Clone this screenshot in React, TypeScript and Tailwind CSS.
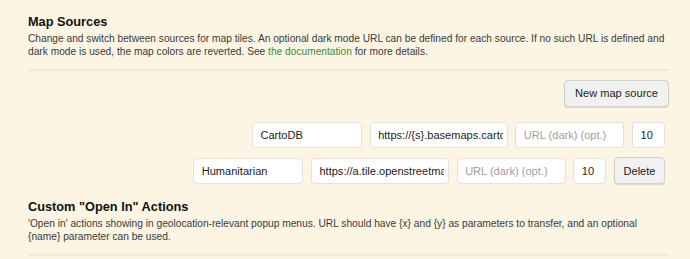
import React from "react";

const inputCls =
  "h-[26.5px] rounded-[4px] border border-[#e3e0d8] bg-white pl-[7.5px] pr-[4px] text-[11.05px] text-[#222] placeholder:text-[#a0a0a0] outline-none";

function Row({ name, url, del }: { name: string; url: string; del?: boolean }) {
  return (
    <div className="flex justify-end items-center gap-[7.7px] pr-[4px]">
      <input className={`${inputCls} w-[110px]`} defaultValue={name} />
      <input className={`${inputCls} w-[138px]`} defaultValue={url} />
      <input className={`${inputCls} w-[109px]`} placeholder="URL (dark) (opt.)" />
      <input className={`${inputCls} w-[33px]`} defaultValue="10" />
      {del && (
        <button className="h-[27px] w-[51px] rounded-[4px] border border-[#cfcfcf] bg-[#f1f1f1] text-[11.05px] text-[#222] shadow-[0_1px_1px_rgba(0,0,0,0.12)]">
          Delete
        </button>
      )}
    </div>
  );
}

export default function App() {
  return (
    <div
      className="w-[690px] h-[259px] overflow-hidden bg-[#fcf5e4] pl-[28px] pr-[21px] pt-[14px]"
      style={{ fontFamily: '"Liberation Sans", Arial, sans-serif' }}
    >
      <h2 className="text-[12.75px] leading-[15px] font-bold text-[#111]">Map Sources</h2>
      <p className="mt-[4.4px] text-[10.2px] leading-[12.4px] text-[#3a3a3a]">
        Change and switch between sources for map tiles. An optional dark mode URL can be defined for each source. If no such URL is defined and dark mode is used, the map colors are reverted. See{" "}
        <a className="text-[#3a8f3a]">the documentation</a> for more details.
      </p>
      <div className="mt-[10.6px] h-[2px] bg-[#efeadd]" />
      <div className="mt-[9px] flex justify-end">
        <button className="h-[27px] px-[10px] rounded-[4px] border border-[#cfcfcf] bg-[#f1f1f1] text-[11.05px] text-[#222] shadow-[0_1px_1px_rgba(0,0,0,0.12)]">
          New map source
        </button>
      </div>
      <div className="mt-[15px] flex flex-col gap-[9px]">
        <Row name="CartoDB" url="https://{s}.basemaps.cartocdn.com/rastertiles/voyager/{z}/{x}/{y}.png" />
        <Row name="Humanitarian" url="https://a.tile.openstreetmap.fr/hot/{z}/{x}/{y}.png" del />
      </div>
      <h2 className="mt-[14.8px] text-[12.75px] leading-[15px] font-bold text-[#111]">
        Custom "Open In" Actions
      </h2>
      <p className="mt-[4.4px] text-[10.2px] leading-[12.4px] text-[#3a3a3a]">
        'Open in' actions showing in geolocation-relevant popup menus. URL should have {"{x}"} and {"{y}"} as parameters to transfer, and an optional {"{name}"} parameter can be used.
      </p>
      <div className="mt-[10.6px] h-[2px] bg-[#efeadd]" />
    </div>
  );
}
